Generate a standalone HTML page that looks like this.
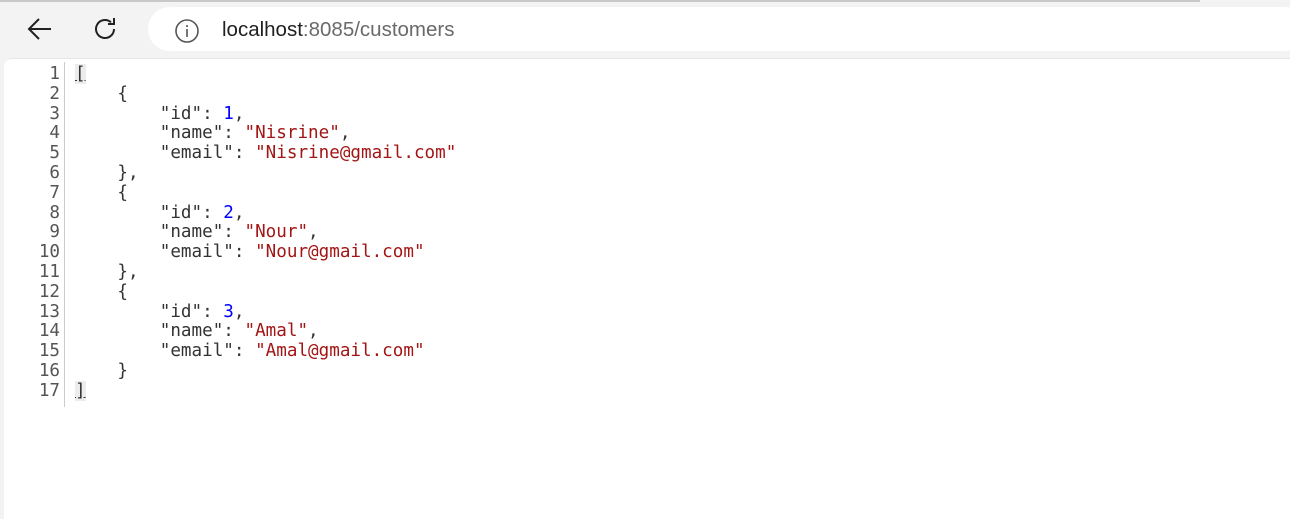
<!DOCTYPE html>
<html><head><style>
body{margin:0;width:1290px;height:505px;background:#f3f3f3;overflow:hidden;position:relative;font-family:"Liberation Sans",sans-serif}
.topline{position:absolute;left:0;top:0;width:1200px;height:2px;background:#c8c8c8}
.addr{position:absolute;left:148px;top:7px;width:1160px;height:44px;background:#fff;border-radius:22px}
.url{position:absolute;left:222px;top:18px;font-size:20.5px;color:#1f1f1f;line-height:24px}
.url span{color:#6a6a6a}
.panel{position:absolute;left:4px;top:58px;width:1300px;height:460px;background:#fff;border-top-left-radius:8px;border-top:1px solid #e6e6e6}
.gut{position:absolute;left:64px;top:62px;width:1px;height:345px;background:#ccc}
pre{margin:0;position:absolute;top:65px;font-family:"DejaVu Sans Mono","Liberation Mono",monospace;font-size:17.6px;line-height:19.8px}
.num{left:20px;width:40px;text-align:right;color:#555}
.code{left:75px;color:#333}
.s{color:#a31515}.n{color:#0000ff}
.b{background:#ececec;text-decoration:underline}
</style></head><body>
<div class="topline"></div>
<svg style="position:absolute;left:26px;top:17px" width="28" height="24" viewBox="0 0 28 24"><path d="M25 12H3M13 2L3 12l10 10" fill="none" stroke="#222" stroke-width="2"/></svg>
<svg style="position:absolute;left:93px;top:16px" width="26" height="26" viewBox="0 0 26 26"><path d="M21 13a9 9 0 1 1-3-6.7" fill="none" stroke="#222" stroke-width="2"/><path d="M21 2v6h-6" fill="none" stroke="#222" stroke-width="2"/></svg>
<div class="addr"></div>
<svg style="position:absolute;left:174px;top:18px" width="26" height="26" viewBox="0 0 26 26"><circle cx="13" cy="13" r="11" fill="none" stroke="#555" stroke-width="1.6"/><rect x="12.2" y="11" width="1.6" height="8" fill="#555"/><rect x="12.2" y="7" width="1.6" height="2" fill="#555"/></svg>
<div class="url">localhost<span>:8085/customers</span></div>
<div class="panel"></div>
<div class="gut"></div>
<pre class="num">1
2
3
4
5
6
7
8
9
10
11
12
13
14
15
16
17</pre>
<pre class="code"><span class="b">[</span>
    {
        "id": <span class="n">1</span>,
        "name": <span class="s">"Nisrine"</span>,
        "email": <span class="s">"Nisrine@gmail.com"</span>
    },
    {
        "id": <span class="n">2</span>,
        "name": <span class="s">"Nour"</span>,
        "email": <span class="s">"Nour@gmail.com"</span>
    },
    {
        "id": <span class="n">3</span>,
        "name": <span class="s">"Amal"</span>,
        "email": <span class="s">"Amal@gmail.com"</span>
    }
<span class="b">]</span></pre>
</body></html>
